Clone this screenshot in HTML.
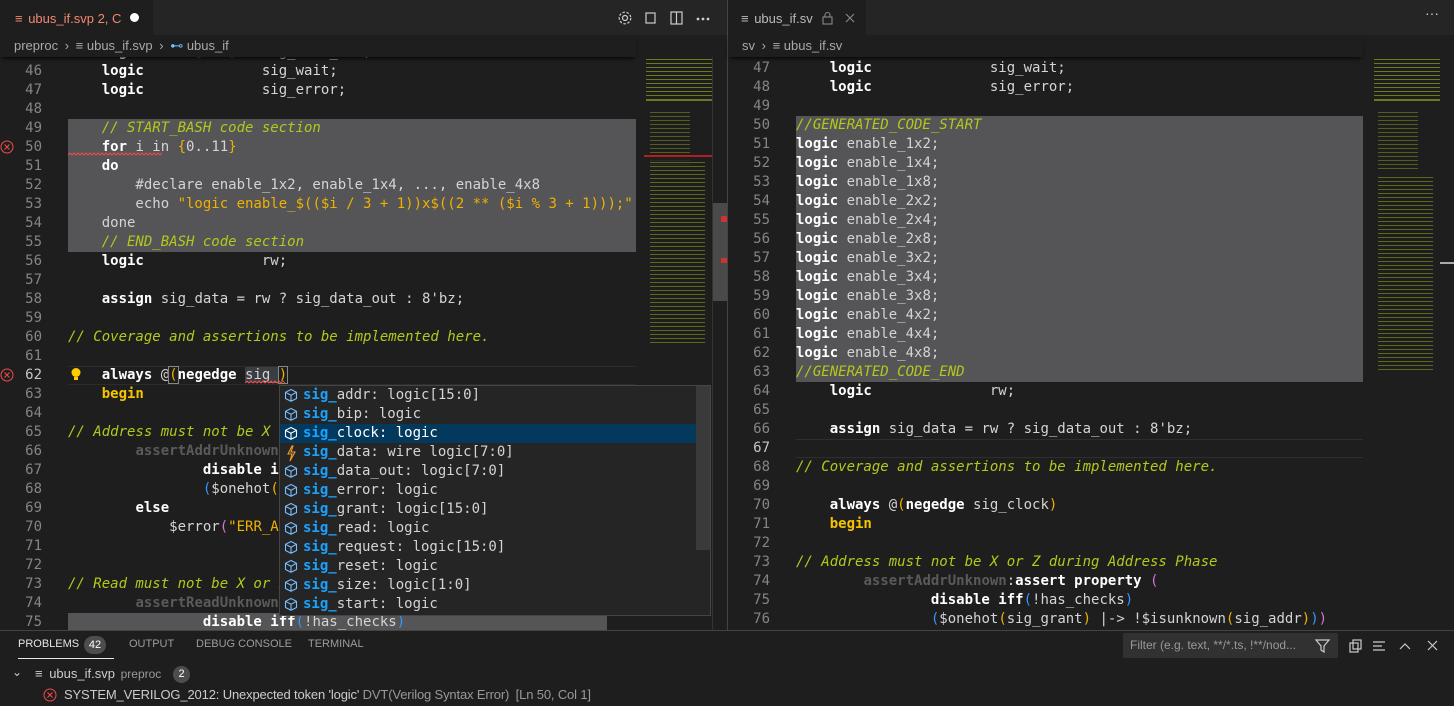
<!DOCTYPE html>
<html><head><meta charset="utf-8"><style>
*{margin:0;padding:0;box-sizing:border-box}
body{width:1454px;height:706px;background:#1e1e1e;overflow:hidden;position:relative;font-family:"Liberation Sans","DejaVu Sans",sans-serif;color:#ccc}
.abs{position:absolute}
.code{font-family:"DejaVu Sans Mono",monospace;font-size:14px;white-space:pre;color:#d4d4d4}
.ln{position:absolute;height:19px;line-height:19px}
.num{position:absolute;height:19px;line-height:19px;text-align:right;width:42px;color:#858585;font-family:"DejaVu Sans Mono",monospace;font-size:14px}
.k{font-weight:bold;color:#fff}
.c{color:#b4c81c;font-style:italic}
.s{color:#efb100}
.y{color:#f5c400;font-weight:bold}
.b{color:#3794ff}
.p{color:#da70d6}
.d{color:#5a5a5a;font-weight:bold}
.hl{position:absolute;background:#555557}
.tabbar{position:absolute;top:0;height:35px;background:#252526}
.bc{position:absolute;top:35px;height:22px;font-size:13px;color:#a9a9a9;line-height:22px;background:#1e1e1e;z-index:5;padding-left:14px;box-shadow:0 3px 4px -2px #000}
.mm{position:absolute;background:repeating-linear-gradient(#1e1e1e 0 2px,#6a7a20 2px 3px,#1e1e1e 3px 4px)}
.sg{position:absolute;height:19px;line-height:19px;left:0;right:0;padding-left:23px}
.sg b{color:#18a3ff;font-weight:bold}
</style></head><body>

<!-- LEFT PANE -->
<div class="tabbar" style="left:0;width:727px"></div>
<div class="abs" style="left:0;top:0;width:153px;height:35px;background:#1e1e1e"></div>
<div class="abs" style="left:15px;top:11px;font-size:13px;color:#f48771">≡ <span style="margin-left:2px">ubus_if.svp 2, C</span></div>
<div class="abs" style="left:130px;top:13px;width:9px;height:9px;border-radius:50%;background:#fff"></div>
<svg class="abs" style="left:617px;top:10px" width="100" height="16" viewBox="0 0 100 16" fill="none" stroke="#ccc" stroke-width="1.2">
<circle cx="8" cy="8" r="2.5"/><circle cx="8" cy="8" r="5.8" stroke-dasharray="2.5 1.6"/>
<rect x="29" y="3" width="9" height="10"/>
<rect x="54" y="2" width="11" height="12"/><line x1="59.5" y1="2" x2="59.5" y2="14"/>
<circle cx="81" cy="9" r=".8" fill="#ccc"/><circle cx="86" cy="9" r=".8" fill="#ccc"/><circle cx="91" cy="9" r=".8" fill="#ccc"/>
</svg>

<div class="hl" style="left:68px;top:118.5px;width:568px;height:133px"></div>
<div class="hl" style="left:68px;top:612.5px;width:539px;height:19px"></div>
<div class="abs" style="left:68px;top:365.5px;width:568px;height:19px;border-top:1px solid #2c2c2c;border-bottom:1px solid #2c2c2c"></div>

<div class="code abs" style="left:0;top:0;width:636px;height:630px;overflow:hidden">
<div class="num" style="top:42.5px">45</div><div class="ln" style="left:68px;top:42.5px">    <span class="k">logic</span>      <span class="s">[7:0]</span>   sig_data_out;</div>
<div class="num" style="top:61.5px">46</div><div class="ln" style="left:68px;top:61.5px">    <span class="k">logic</span>              sig_wait;</div>
<div class="num" style="top:80.5px">47</div><div class="ln" style="left:68px;top:80.5px">    <span class="k">logic</span>              sig_error;</div>
<div class="num" style="top:99.5px">48</div>
<div class="num" style="top:118.5px">49</div><div class="ln" style="left:68px;top:118.5px">    <span class="c">// START_BASH code section</span></div>
<div class="num" style="top:137.5px">50</div><div class="ln" style="left:68px;top:137.5px">    <span class="k">for</span> i in <span class="s">{</span>0..11<span class="s">}</span></div>
<div class="num" style="top:156.5px">51</div><div class="ln" style="left:68px;top:156.5px">    <span class="k">do</span></div>
<div class="num" style="top:175.5px">52</div><div class="ln" style="left:68px;top:175.5px">        #declare enable_1x2, enable_1x4, ..., enable_4x8</div>
<div class="num" style="top:194.5px">53</div><div class="ln" style="left:68px;top:194.5px">        echo <span class="s">"logic enable_$(($i / 3 + 1))x$((2 ** ($i % 3 + 1)));"</span></div>
<div class="num" style="top:213.5px">54</div><div class="ln" style="left:68px;top:213.5px">    done</div>
<div class="num" style="top:232.5px">55</div><div class="ln" style="left:68px;top:232.5px">    <span class="c">// END_BASH code section</span></div>
<div class="num" style="top:251.5px">56</div><div class="ln" style="left:68px;top:251.5px">    <span class="k">logic</span>              rw;</div>
<div class="num" style="top:270.5px">57</div>
<div class="num" style="top:289.5px">58</div><div class="ln" style="left:68px;top:289.5px">    <span class="k">assign</span> sig_data = rw ? sig_data_out : 8'bz;</div>
<div class="num" style="top:308.5px">59</div>
<div class="num" style="top:327.5px">60</div><div class="ln" style="left:68px;top:327.5px"><span class="c">// Coverage and assertions to be implemented here.</span></div>
<div class="num" style="top:346.5px">61</div>
<div class="num" style="top:365.5px;color:#c6c6c6">62</div><div class="ln" style="left:68px;top:365.5px">    <span class="k">always</span> @<span class="s" style="outline:1px solid #888">(</span><span class="k">negedge</span> <span style="background:#3a3d41">sig_</span><span class="s" style="outline:1px solid #888">)</span></div>
<div class="num" style="top:384.5px">63</div><div class="ln" style="left:68px;top:384.5px">    <span class="y">begin</span></div>
<div class="num" style="top:403.5px">64</div>
<div class="num" style="top:422.5px">65</div><div class="ln" style="left:68px;top:422.5px"><span class="c">// Address must not be X or Z during Address Phase</span></div>
<div class="num" style="top:441.5px">66</div><div class="ln" style="left:68px;top:441.5px">        <span class="d">assertAddrUnknown</span>:<span class="k">assert property</span></div>
<div class="num" style="top:460.5px">67</div><div class="ln" style="left:68px;top:460.5px">                <span class="k">disable iff</span></div>
<div class="num" style="top:479.5px">68</div><div class="ln" style="left:68px;top:479.5px">                <span class="b">(</span>$onehot<span class="s">(</span></div>
<div class="num" style="top:498.5px">69</div><div class="ln" style="left:68px;top:498.5px">        <span class="k">else</span></div>
<div class="num" style="top:517.5px">70</div><div class="ln" style="left:68px;top:517.5px">            $error<span class="p">(</span><span class="s">"ERR_ADDR"</span></div>
<div class="num" style="top:536.5px">71</div>
<div class="num" style="top:555.5px">72</div>
<div class="num" style="top:574.5px">73</div><div class="ln" style="left:68px;top:574.5px"><span class="c">// Read must not be X or Z during</span></div>
<div class="num" style="top:593.5px">74</div><div class="ln" style="left:68px;top:593.5px">        <span class="d">assertReadUnknown</span></div>
<div class="num" style="top:612.5px">75</div><div class="ln" style="left:68px;top:612.5px">                <span class="k">disable iff</span><span class="b">(</span>!has_checks<span class="b">)</span></div>
</div>
<div class="bc" style="left:0;width:636px">preproc <span style="margin:0 3px">›</span> ≡ ubus_if.svp <span style="margin:0 3px">›</span> <span style="color:#75beff">⊷</span> ubus_if</div>
<!-- squiggles -->
<svg class="abs" style="left:68px;top:152px" width="94" height="4"><path d="M0 3 l2-2 2 2 2-2 2 2 2-2 2 2 2-2 2 2 2-2 2 2 2-2 2 2 2-2 2 2 2-2 2 2 2-2 2 2 2-2 2 2 2-2 2 2 2-2 2 2 2-2 2 2 2-2 2 2 2-2 2 2 2-2 2 2 2-2 2 2 2-2 2 2 2-2 2 2 2-2 2 2 2-2 2 2 2-2 2 2 2-2 2 2 2-2 2 2 2-2 2 2" stroke="#f14c4c" fill="none" stroke-width="1"/></svg>
<svg class="abs" style="left:245px;top:380px" width="40" height="4"><path d="M0 3 l2-2 2 2 2-2 2 2 2-2 2 2 2-2 2 2 2-2 2 2 2-2 2 2 2-2 2 2 2-2 2 2 2-2 2 2 2-2 2 2" stroke="#f14c4c" fill="none"/></svg>
<!-- error icons -->
<svg class="abs" style="left:0;top:140px" width="14" height="14"><circle cx="7" cy="7" r="6" stroke="#f14c4c" fill="none"/><path d="M4.5 4.5l5 5M9.5 4.5l-5 5" stroke="#f14c4c"/></svg>
<svg class="abs" style="left:0;top:368px" width="14" height="14"><circle cx="7" cy="7" r="6" stroke="#f14c4c" fill="none"/><path d="M4.5 4.5l5 5M9.5 4.5l-5 5" stroke="#f14c4c"/></svg>
<svg class="abs" style="left:70px;top:367px" width="12" height="15"><circle cx="6" cy="5.5" r="4.5" fill="#ffcc00"/><rect x="4" y="10" width="4" height="3" fill="#ffcc00"/></svg>
<!-- minimap -->
<div class="mm" style="left:646px;top:57px;width:66px;height:40px"></div>
<div class="abs" style="left:646px;top:99px;width:66px;height:2px;background:#6a7a20"></div>
<div class="mm" style="left:650px;top:110px;width:40px;height:55px;opacity:.7"></div>
<div class="abs" style="left:644px;top:155px;width:68px;height:2px;background:#b02020"></div>
<div class="mm" style="left:650px;top:160px;width:55px;height:185px;opacity:.8"></div>
<div class="abs" style="left:712px;top:57px;width:1px;height:573px;background:#333"></div>
<div class="abs" style="left:713px;top:203px;width:14px;height:98px;background:#4a4a4a"></div>
<div class="abs" style="left:721px;top:216px;width:6px;height:6px;background:#c33"></div>
<div class="abs" style="left:721px;top:258px;width:6px;height:5px;background:#c33"></div>

<!-- suggest widget -->
<div class="code abs" style="left:279px;top:385px;width:432px;height:231px;background:#252526;border:1px solid #454545;overflow:hidden;z-index:6">
<div class="abs" style="left:0;top:38px;width:416px;height:19px;background:#04395e"></div>
<div class="abs" style="right:0;top:0;width:14px;height:164px;background:#3a3a3a"></div>
<div class="abs" style="top:0;left:0;width:416px">
<div class="sg" style="top:0"><b>sig_</b>addr: logic[15:0]</div>
<div class="sg" style="top:19px"><b>sig_</b>bip: logic</div>
<div class="sg" style="top:38px;color:#fff"><b>sig_</b>clock: logic</div>
<div class="sg" style="top:57px"><b>sig_</b>data: wire logic[7:0]</div>
<div class="sg" style="top:76px"><b>sig_</b>data_out: logic[7:0]</div>
<div class="sg" style="top:95px"><b>sig_</b>error: logic</div>
<div class="sg" style="top:114px"><b>sig_</b>grant: logic[15:0]</div>
<div class="sg" style="top:133px"><b>sig_</b>read: logic</div>
<div class="sg" style="top:152px"><b>sig_</b>request: logic[15:0]</div>
<div class="sg" style="top:171px"><b>sig_</b>reset: logic</div>
<div class="sg" style="top:190px"><b>sig_</b>size: logic[1:0]</div>
<div class="sg" style="top:209px"><b>sig_</b>start: logic</div>
</div>
<svg class="abs" style="left:0;top:0" width="22" height="231" fill="none" stroke="#75beff" stroke-width="1.1">
<g id="cb"><path d="M11 3.5l5.5 2.8v6.2L11 15.3 5.5 12.5V6.3z M5.5 6.3L11 9.2l5.5-2.9 M11 9.2v6"/></g>
<use href="#cb" y="19"/><use href="#cb" y="38" stroke="#fff"/>
<path d="M12 60l-4 8h4l-2 7 5-9h-4l2-6z" stroke="#ee9d28"/>
<use href="#cb" y="76"/><use href="#cb" y="95"/><use href="#cb" y="114"/><use href="#cb" y="133"/><use href="#cb" y="152"/><use href="#cb" y="171"/><use href="#cb" y="190"/><use href="#cb" y="209"/>
</svg>
</div>

<div class="abs" style="left:727px;top:0;width:1px;height:630px;background:#444"></div>

<!-- RIGHT PANE -->
<div class="tabbar" style="left:728px;width:726px"></div>
<div class="abs" style="left:728px;top:0;width:138px;height:35px;background:#1e1e1e"></div>
<div class="abs" style="left:741px;top:11px;font-size:13px;color:#bbb">≡ <span style="margin-left:2px">ubus_if.sv</span></div>
<svg class="abs" style="left:822px;top:10px" width="40" height="16" fill="none" stroke="#888" stroke-width="1.1"><rect x="1" y="7" width="9" height="7"/><path d="M3 7V5a2.5 2.5 0 0 1 5 0v2"/><path d="M24 4l8 8M32 4l-8 8"/></svg>
<div class="abs" style="left:1425px;top:5px;font-size:14px;color:#ccc">···</div>

<div class="hl" style="left:796px;top:115.5px;width:567px;height:266px"></div>
<div class="abs" style="left:796px;top:438.5px;width:567px;height:19px;border-top:1px solid #2e2e2e;border-bottom:1px solid #2e2e2e"></div>

<div class="code abs" style="left:728px;top:0;width:635px;height:630px;overflow:hidden">
<div class="num" style="top:39.5px">46</div><div class="ln" style="left:68px;top:39.5px">    <span class="k">logic</span>              sig_data;</div>
<div class="num" style="top:58.5px">47</div><div class="ln" style="left:68px;top:58.5px">    <span class="k">logic</span>              sig_wait;</div>
<div class="num" style="top:77.5px">48</div><div class="ln" style="left:68px;top:77.5px">    <span class="k">logic</span>              sig_error;</div>
<div class="num" style="top:96.5px">49</div>
<div class="num" style="top:115.5px">50</div><div class="ln" style="left:68px;top:115.5px"><span class="c">//GENERATED_CODE_START</span></div>
<div class="num" style="top:134.5px">51</div><div class="ln" style="left:68px;top:134.5px"><span class="k">logic</span> enable_1x2;</div>
<div class="num" style="top:153.5px">52</div><div class="ln" style="left:68px;top:153.5px"><span class="k">logic</span> enable_1x4;</div>
<div class="num" style="top:172.5px">53</div><div class="ln" style="left:68px;top:172.5px"><span class="k">logic</span> enable_1x8;</div>
<div class="num" style="top:191.5px">54</div><div class="ln" style="left:68px;top:191.5px"><span class="k">logic</span> enable_2x2;</div>
<div class="num" style="top:210.5px">55</div><div class="ln" style="left:68px;top:210.5px"><span class="k">logic</span> enable_2x4;</div>
<div class="num" style="top:229.5px">56</div><div class="ln" style="left:68px;top:229.5px"><span class="k">logic</span> enable_2x8;</div>
<div class="num" style="top:248.5px">57</div><div class="ln" style="left:68px;top:248.5px"><span class="k">logic</span> enable_3x2;</div>
<div class="num" style="top:267.5px">58</div><div class="ln" style="left:68px;top:267.5px"><span class="k">logic</span> enable_3x4;</div>
<div class="num" style="top:286.5px">59</div><div class="ln" style="left:68px;top:286.5px"><span class="k">logic</span> enable_3x8;</div>
<div class="num" style="top:305.5px">60</div><div class="ln" style="left:68px;top:305.5px"><span class="k">logic</span> enable_4x2;</div>
<div class="num" style="top:324.5px">61</div><div class="ln" style="left:68px;top:324.5px"><span class="k">logic</span> enable_4x4;</div>
<div class="num" style="top:343.5px">62</div><div class="ln" style="left:68px;top:343.5px"><span class="k">logic</span> enable_4x8;</div>
<div class="num" style="top:362.5px">63</div><div class="ln" style="left:68px;top:362.5px"><span class="c">//GENERATED_CODE_END</span></div>
<div class="num" style="top:381.5px">64</div><div class="ln" style="left:68px;top:381.5px">    <span class="k">logic</span>              rw;</div>
<div class="num" style="top:400.5px">65</div>
<div class="num" style="top:419.5px">66</div><div class="ln" style="left:68px;top:419.5px">    <span class="k">assign</span> sig_data = rw ? sig_data_out : 8'bz;</div>
<div class="num" style="top:438.5px;color:#c6c6c6">67</div>
<div class="num" style="top:457.5px">68</div><div class="ln" style="left:68px;top:457.5px"><span class="c">// Coverage and assertions to be implemented here.</span></div>
<div class="num" style="top:476.5px">69</div>
<div class="num" style="top:495.5px">70</div><div class="ln" style="left:68px;top:495.5px">    <span class="k">always</span> @<span class="s">(</span><span class="k">negedge</span> sig_clock<span class="s">)</span></div>
<div class="num" style="top:514.5px">71</div><div class="ln" style="left:68px;top:514.5px">    <span class="y">begin</span></div>
<div class="num" style="top:533.5px">72</div>
<div class="num" style="top:552.5px">73</div><div class="ln" style="left:68px;top:552.5px"><span class="c">// Address must not be X or Z during Address Phase</span></div>
<div class="num" style="top:571.5px">74</div><div class="ln" style="left:68px;top:571.5px">        <span class="d">assertAddrUnknown</span>:<span class="k">assert property</span> <span class="p">(</span></div>
<div class="num" style="top:590.5px">75</div><div class="ln" style="left:68px;top:590.5px">                <span class="k">disable iff</span><span class="b">(</span>!has_checks<span class="b">)</span></div>
<div class="num" style="top:609.5px">76</div><div class="ln" style="left:68px;top:609.5px">                <span class="b">(</span>$onehot<span class="s">(</span>sig_grant<span class="s">)</span> |-&gt; !$isunknown<span class="s">(</span>sig_addr<span class="s">)</span><span class="b">)</span><span class="p">)</span></div>
</div>
<div class="bc" style="left:728px;width:635px">sv <span style="margin:0 3px">›</span> ≡ ubus_if.sv</div>
<div class="mm" style="left:1374px;top:57px;width:66px;height:40px"></div>
<div class="abs" style="left:1374px;top:99px;width:66px;height:2px;background:#6a7a20"></div>
<div class="mm" style="left:1378px;top:110px;width:40px;height:60px;opacity:.7"></div>
<div class="mm" style="left:1378px;top:175px;width:55px;height:195px;opacity:.8"></div>
<div class="abs" style="left:1440px;top:262px;width:14px;height:2px;background:#aaa"></div>

<!-- PANEL -->
<div class="abs" style="left:0;top:630px;width:1454px;height:76px;background:#1e1e1e;border-top:1px solid #444;z-index:7"></div>
<div style="position:absolute;left:0;top:0;width:1454px;height:706px;z-index:8">
<div class="abs" style="left:18px;top:638px;font-size:11px;color:#e7e7e7">PROBLEMS</div>
<div class="abs" style="left:84px;top:636px;width:22px;height:18px;border-radius:9px;background:#4d4d4d;color:#fff;font-size:11px;text-align:center;line-height:18px">42</div>
<div class="abs" style="left:18px;top:658px;width:96px;height:1px;background:#e7e7e7"></div>
<div class="abs" style="left:129px;top:638px;font-size:11px;color:#9d9d9d">OUTPUT</div>
<div class="abs" style="left:196px;top:638px;font-size:11px;color:#9d9d9d">DEBUG CONSOLE</div>
<div class="abs" style="left:308px;top:638px;font-size:11px;color:#9d9d9d">TERMINAL</div>
<div class="abs" style="left:1123px;top:633px;width:215px;height:25px;background:#313131;border-radius:2px;font-size:12px;color:#999;padding:5px 7px">Filter (e.g. text, **/*.ts, !**/nod...</div>
<svg class="abs" style="left:1313px;top:637px" width="140" height="18" fill="none" stroke="#ccc" stroke-width="1.2">
<path d="M3 3h13l-5 6v6l-3-2v-4z"/>
<rect x="37" y="6" width="8" height="9"/><rect x="40" y="3" width="8" height="9"/>
<path d="M60 5h12M60 9h9M60 13h12"/>
<path d="M87 12l5-5 5 5"/>
<path d="M115 4l9 9M124 4l-9 9"/>
</svg>
<div class="abs" style="left:12px;top:665px;font-size:12px;color:#ccc">⌄</div>
<div class="abs" style="left:35px;top:666px;font-size:13px;color:#ccc">≡ <span style="margin-left:3px">ubus_if.svp</span> <span style="font-size:12px;color:#999;margin-left:2px">preproc</span></div>
<div class="abs" style="left:173px;top:666px;width:17px;height:17px;border-radius:50%;background:#4d4d4d;color:#fff;font-size:11px;text-align:center;line-height:17px">2</div>
<svg class="abs" style="left:43px;top:688px" width="14" height="14"><circle cx="7" cy="7" r="6" stroke="#f14c4c" fill="none"/><path d="M4.5 4.5l5 5M9.5 4.5l-5 5" stroke="#f14c4c"/></svg>
<div class="abs" style="left:64px;top:687px;font-size:13px;color:#ccc;white-space:nowrap;letter-spacing:-0.15px">SYSTEM_VERILOG_2012: Unexpected token 'logic' <span style="color:#999">DVT(Verilog Syntax Error)</span> <span style="color:#999;margin-left:3px">[Ln 50, Col 1]</span></div>
</div>
</body></html>
